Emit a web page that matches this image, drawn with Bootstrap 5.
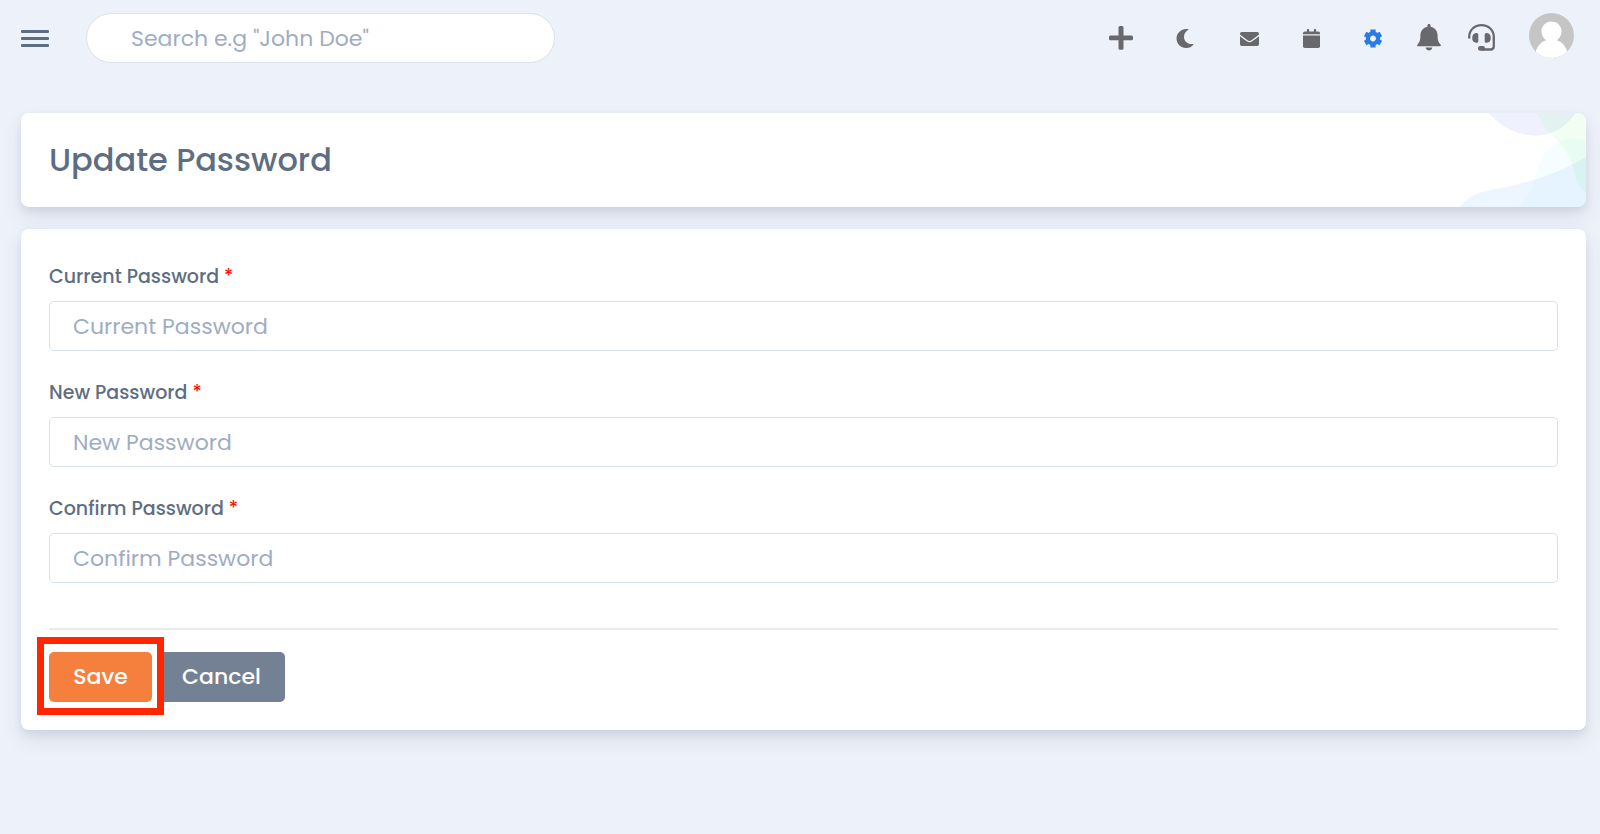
<!DOCTYPE html>
<html lang="en">
<head>
<meta charset="utf-8">
<meta name="viewport" content="width=device-width, initial-scale=1">
<title>Update Password</title>
<link href="https://cdn.jsdelivr.net/npm/bootstrap@5.3.0/dist/css/bootstrap.min.css" rel="stylesheet">
<style>
  body { background: #ecf1fa; color: #5e6e82; font-family: Poppins, Inter, "Open Sans", sans-serif; font-size: 22px; }
  .topbar { height: 76px; padding: 0 26px 0 21px; }
  .search-box { width: 469px; height: 50px; padding: 0 44px; border: 1px solid #dfe4ea; border-radius: 25px; font-size: 22px; }
  .menu-btn { margin-right: 37px; }
  .form-control::placeholder { color: #9fadc2; opacity: 1; }
  .icon-btn { background: none; border: 0; padding: 0; color: #69696d; width: 64px; height: 50px; display: flex; align-items: center; justify-content: center; }
  .icon-btn.w-cal { width: 60px; }
  .icon-btn.w-bell { width: 48px; }
  .icon-btn.w-help { width: 56px; }
  .icon-btn.active-tool { color: #2c7be5; }
  .avatar-link { margin-left: 20px; margin-bottom: 6px; }
  .page-main { padding: 37px 14px 40px 21px; }
  .panel { background: #fff; border-radius: 8px; box-shadow: 0 10px 20px rgba(65,69,88,.1), 0 4px 8px rgba(0,0,0,.07); }
  .title-panel { height: 94px; padding: 0 28px; margin-bottom: 22px; }
  .title-panel h1 { font-size: 32px; font-weight: 500; line-height: 40px; }
  .corner-art { position: absolute; top: 0; right: 0; height: 100%; width: 130px; }
  .form-panel { padding: 28px; }
  .field { margin-bottom: 22px; }
  .field label { display: block; font-size: 19px; font-weight: 500; line-height: 40px; margin-bottom: 4px; }
  .req { color: #ff0000; font-weight: 400; }
  .field .form-control { height: 50px; padding: 0 23px; border: 1px solid #d8e0ec; border-radius: 5px; font-size: 22px; }
  .rule { border: 0; height: 2px; background: #e9eaec; opacity: 1; margin: 45px 0 22px; }
  .act { height: 50px; padding: 0 23px; border: 0; border-radius: 5px; color: #fff; font-size: 22px; font-weight: 500; line-height: 50px; }
  .act-save { background: #f5803e; width: 103px; }
  .act-cancel { background: #748194; width: 127px; }
  .callout { z-index: 1; margin-right: 6px; }
  .callout::after { content: ""; position: absolute; inset: -15px -12px -13px; border: 7px solid #ff2600; box-shadow: inset 0 0 0 5px #fff; pointer-events: none; }
</style>
</head>
<body>
<header class="topbar d-flex align-items-center">
  <button class="menu-btn btn p-0 border-0 d-flex" type="button" aria-label="Menu">
    <svg width="28" height="19" viewBox="0 0 28 19" fill="#5e6e82"><rect y="1" width="28" height="3" rx="1"/><rect y="8" width="28" height="3" rx="1"/><rect y="15" width="28" height="3" rx="1"/></svg>
  </button>
  <input class="form-control search-box" type="search" placeholder='Search e.g "John Doe"' aria-label="Search">
  <nav class="d-flex align-items-center ms-auto" aria-label="Tools">
    <button class="icon-btn" type="button" aria-label="Add"><svg width="24" height="26" viewBox="0 0 24 26" fill="currentColor"><path d="M11 1h2q1.500 0 1.500 1.500v8h8q1.500 0 1.500 1.500v1.800q0 1.500-1.500 1.500h-8v8q0 1.500-1.500 1.500h-2q-1.500 0-1.500-1.500v-8h-8Q0 15.300 0 13.800V12q0-1.500 1.500-1.500h8v-8Q9.500 1 11 1z"/></svg></button>
    <button class="icon-btn" type="button" aria-label="Dark mode"><svg width="18" height="20" viewBox="0 0 18 20" fill="currentColor"><path d="M10.500 1C4.500 1 .5 5.500.5 10.500S4.500 20 10.200 20c3.200 0 5.600-1.300 7.100-3.300.3-.5 0-.9-.6-.8C12 16.700 8 13.500 8 9c0-3 1.500-5.500 4.100-7 .5-.3.4-.8-.1-.9z"/></svg></button>
    <button class="icon-btn" type="button" aria-label="Mail"><svg width="19" height="15" viewBox="0 0 19 15" fill="currentColor"><path d="M1.800 1h15.400Q19 1 19 2.800v.7c-1.500 1.300-3.700 3-7.200 5.500-1.600 1.200-3 1.200-4.600 0C3.700 6.500 1.500 4.800 0 3.500v-.7Q0 1 1.800 1z"/><path d="M0 5.300c1.600 1.300 3.900 3 6.500 4.800 2.200 1.600 3.800 1.600 6 0 2.600-1.800 4.900-3.500 6.500-4.800v7.900Q19 15 17.200 15H1.800Q0 15 0 13.200z"/></svg></button>
    <button class="icon-btn w-cal" type="button" aria-label="Calendar"><svg width="17" height="20" viewBox="0 0 17 20" fill="currentColor"><path d="M4.500 1h1q.6 0 .6.600V3.400h4.800V1.600q0-.6.600-.6h1q.6 0 .6.600V3.400h2.100Q17 3.400 17 5v1.300H0V5q0-1.600 1.800-1.600h2.100V1.600q0-.6.600-.6z"/><path d="M0 7.500h17v10.700q0 1.800-1.800 1.800H1.800Q0 20 0 18.200z"/></svg></button>
    <button class="icon-btn active-tool" type="button" aria-label="Settings"><svg width="18" height="20" viewBox="-9 -10.500 18 20" fill="none" stroke="currentColor"><circle r="5.100" stroke-width="4.200"/><g stroke-width="5.200"><path d="M0-5.500v-3.600M0 5.500v3.600"/><path d="M0-5.500v-3.600M0 5.500v3.600" transform="rotate(60)"/><path d="M0-5.500v-3.600M0 5.500v3.600" transform="rotate(120)"/></g></svg></button>
    <button class="icon-btn w-bell" type="button" aria-label="Notifications"><svg width="24" height="28" viewBox="0 0 24 28" fill="currentColor"><path d="M12 0c1 0 1.600.7 1.600 1.700v1c4.300.8 7 4.300 7 8.500 0 5.300 1 7.300 2.700 9 1 1 .5 2-.8 2h-21c-1.300 0-1.800-1-.8-2 1.700-1.700 2.700-3.700 2.700-9 0-4.200 2.700-7.700 7-8.500v-1C10.400.7 11 0 12 0z"/><path d="M8.700 23.600h6.600c-.2 2-1.600 3-3.300 3s-3.100-1-3.300-3z"/></svg></button>
    <button class="icon-btn w-help" type="button" aria-label="Support"><svg width="27" height="28" viewBox="0 0 27 28" fill="currentColor"><path d="M1.200 14.500V13C1.200 6 6.500 1.200 13.500 1.200S25.800 6 25.800 13v9.200q0 3.300-3.300 3.300H14" fill="none" stroke="currentColor" stroke-width="2.300"/><path d="M8.200 9h.6q1.500 0 1.500 1.500v6.800q0 1.500-1.500 1.500h-.6q-4-.6-4-4.900T8.200 9zM18.800 9h-.6q-1.500 0-1.500 1.500v6.800q0 1.500 1.500 1.500h.6q4-.6 4-4.900T18.800 9z"/><rect x="10" y="22" width="7" height="4.800" rx="2.300"/></svg></button>
    <a class="avatar-link d-flex" href="#" aria-label="Profile"><svg width="45" height="45" viewBox="0 0 45 45"><clipPath id="disc"><circle cx="22.500" cy="22.500" r="22.500"/></clipPath><g clip-path="url(#disc)"><path fill="#c5c5c5" d="M0 0h45v45H0z"/><path fill="#fff" d="M22.500 8.500c6 0 10 4.500 10 10 0 3.600-1.700 6.700-4.700 8.700C33 28.500 36.500 33 38.500 39v6h-32v-6c2-6 5.500-10.500 10.700-11.800-3-2-4.700-5.100-4.700-8.700 0-5.500 4-10 10-10z"/></g></svg></a>
  </nav>
</header>
<main class="page-main">
  <section class="panel title-panel d-flex align-items-center position-relative">
    <h1 class="mb-0">Update Password</h1>
    <svg class="corner-art rounded-end-3" viewBox="78 39 390 282" preserveAspectRatio="xMaxYMid meet" aria-hidden="true">
      <path fill="#7f90f5" fill-opacity=".12" d="M175 39Q240 107 315 107T437 39z"/>
      <path fill="#7dfa7d" fill-opacity=".1" d="M322 39C335 75 358 98 380 120C408 148 425 180 431 210C437 245 448 262 468 278V39z"/>
      <path fill="#85e8ff" fill-opacity=".07" d="M265 321C290 295 305 275 313 240C325 190 335 160 372 134C400 112 440 110 468 122V321z"/>
      <path fill="#6ab2fa" fill-opacity=".12" d="M90 321C125 275 175 272 225 262C310 245 400 212 468 170V321z"/>
    </svg>
  </section>
  <form class="panel form-panel">
    <div class="field">
      <label for="current">Current Password <span class="req">*</span></label>
      <input class="form-control" id="current" type="password" placeholder="Current Password">
    </div>
    <div class="field">
      <label for="new">New Password <span class="req">*</span></label>
      <input class="form-control" id="new" type="password" placeholder="New Password">
    </div>
    <div class="field">
      <label for="confirm">Confirm Password <span class="req">*</span></label>
      <input class="form-control" id="confirm" type="password" placeholder="Confirm Password">
    </div>
    <hr class="rule">
    <div class="d-flex">
      <div class="callout position-relative"><button class="btn act act-save" type="submit">Save</button></div>
      <button class="btn act act-cancel" type="button">Cancel</button>
    </div>
  </form>
</main>
<script src="https://cdn.jsdelivr.net/npm/bootstrap@5.3.0/dist/js/bootstrap.bundle.min.js"></script>
</body>
</html>
